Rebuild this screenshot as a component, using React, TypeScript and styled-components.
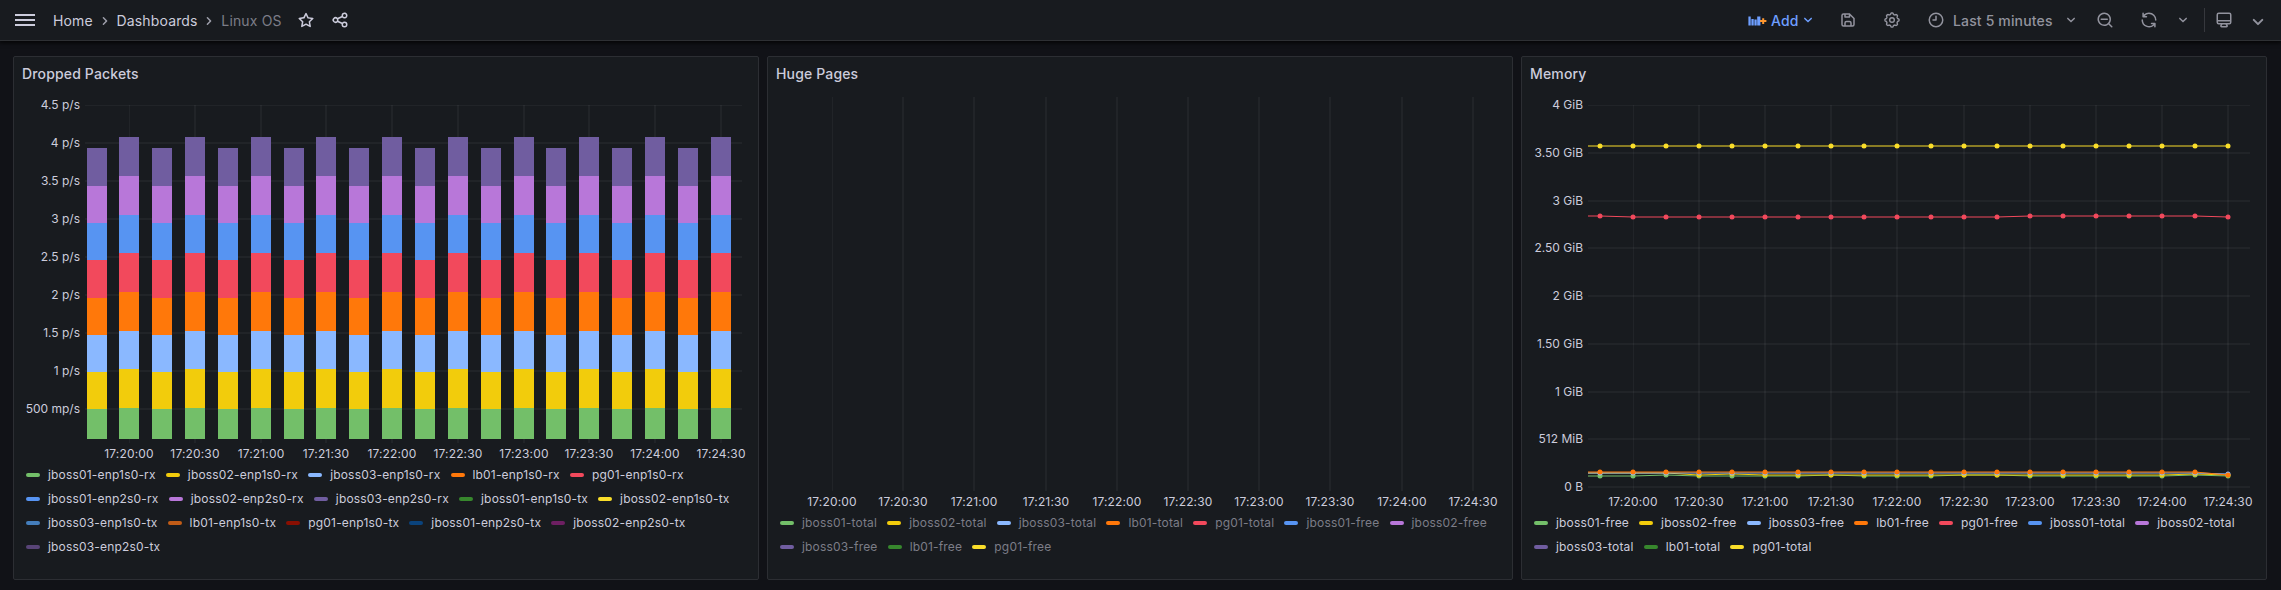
import React from 'react';
import styled, { createGlobalStyle } from 'styled-components';

const GlobalStyle = createGlobalStyle`
  * { box-sizing: border-box; }
  body {
    margin: 0;
    background: #111217;
    color: #ccccdc;
    font-family: Inter, Roboto, sans-serif;
    font-size: 14px;
    letter-spacing: 0.01071em;
    overflow: hidden;
  }
`;

const FONT = 'Inter, Roboto, sans-serif';
const GRID = 'rgba(240, 250, 255, 0.09)';

/* ---------- icons ---------- */

const ICONS = {
  angle:
    'M17,9.17a1,1,0,0,0-1.41,0L12,12.71,8.46,9.17a1,1,0,0,0-1.41,0,1,1,0,0,0,0,1.42l4.24,4.24a1,1,0,0,0,1.42,0L17,10.59A1,1,0,0,0,17,9.17Z',
  star:
    'M22,9.67A1,1,0,0,0,21.14,9l-5.69-.83L12.9,3a1,1,0,0,0-1.8,0L8.55,8.16,2.86,9a1,1,0,0,0-.81.68,1,1,0,0,0,.25,1l4.13,4-1,5.68A1,1,0,0,0,6.9,21.44L12,18.77l5.1,2.67a.93.93,0,0,0,.46.12,1,1,0,0,0,.59-.19,1,1,0,0,0,.4-1l-1-5.68,4.13-4A1,1,0,0,0,22,9.67Zm-6.15,4a1,1,0,0,0-.29.88l.72,4.2-3.76-2a1.06,1.06,0,0,0-.94,0l-3.76,2,.72-4.2a1,1,0,0,0-.29-.88l-3-3,4.21-.61a1,1,0,0,0,.76-.55L12,5.7l1.88,3.82a1,1,0,0,0,.76.55l4.21.61Z',
  share:
    'M18,14a4,4,0,0,0-3.08,1.48l-5.1-2.35a3.64,3.64,0,0,0,0-2.26l5.1-2.35A4,4,0,1,0,14,6a4.17,4.17,0,0,0,.07.71L8.79,9.14a4,4,0,1,0,0,5.72l5.28,2.43A4.17,4.17,0,0,0,14,18a4,4,0,1,0,4-4ZM18,4a2,2,0,1,1-2,2A2,2,0,0,1,18,4ZM6,14a2,2,0,1,1,2-2A2,2,0,0,1,6,14Zm12,6a2,2,0,1,1,2-2A2,2,0,0,1,18,20Z',
  save:
    'M20.71,9.29l-6-6a1,1,0,0,0-.32-.21A1.09,1.09,0,0,0,14,3H6A3,3,0,0,0,3,6V18a3,3,0,0,0,3,3H18a3,3,0,0,0,3-3V10A1,1,0,0,0,20.71,9.29ZM9,5h4V7H9Zm6,14H9V16a1,1,0,0,1,1-1h4a1,1,0,0,1,1,1Zm4-1a1,1,0,0,1-1,1H17V16a3,3,0,0,0-3-3H10a3,3,0,0,0-3,3v3H6a1,1,0,0,1-1-1V6A1,1,0,0,1,6,5H7V8A1,1,0,0,0,8,9h6a1,1,0,0,0,1-1V6.41l4,4Z',
  clock:
    'M12,2A10,10,0,1,0,22,12,10,10,0,0,0,12,2Zm0,18a8,8,0,1,1,8-8A8,8,0,0,1,12,20ZM12,6a1,1,0,0,0-1,1v4H8a1,1,0,0,0,0,2h4a1,1,0,0,0,1-1V7A1,1,0,0,0,12,6Z',
  zoomOut:
    'M15,10H7a1,1,0,0,0,0,2h8a1,1,0,0,0,0-2Zm6.71,10.29L18,16.61A9,9,0,1,0,16.61,18l3.68,3.68a1,1,0,0,0,1.42,0A1,1,0,0,0,21.71,20.29ZM11,18a7,7,0,1,1,7-7A7,7,0,0,1,11,18Z',
  sync:
    'M19.91,15.51H15.38a1,1,0,0,0,0,2h2.4A8,8,0,0,1,4,12a1,1,0,0,0-2,0,10,10,0,0,0,16.88,7.23V21a1,1,0,0,0,2,0V16.5A1,1,0,0,0,19.91,15.51ZM12,2A10,10,0,0,0,5.12,4.77V3a1,1,0,0,0-2,0V7.5a1,1,0,0,0,1,1h4.5a1,1,0,0,0,0-2H6.22A8,8,0,0,1,20,12a1,1,0,0,0,2,0A10,10,0,0,0,12,2Z',
  monitor:
    'M19,2H5A3,3,0,0,0,2,5V15a3,3,0,0,0,3,3H7.64l-.58,1a2,2,0,0,0,0,2,2,2,0,0,0,1.75,1h6.46A2,2,0,0,0,17,21a2,2,0,0,0,0-2l-.59-1H19a3,3,0,0,0,3-3V5A3,3,0,0,0,19,2ZM8.77,20,10,18H14l1.2,2ZM20,15a1,1,0,0,1-1,1H5a1,1,0,0,1-1-1V14H20Zm0-3H4V5A1,1,0,0,1,5,4H19a1,1,0,0,1,1,1Z',
};

const Svg = styled.svg<{ $size: number; $turn?: number }>`
  display: block;
  flex: none;
  width: ${p => p.$size}px;
  height: ${p => p.$size}px;
  transform: rotate(${p => p.$turn ?? 0}deg);
`;

function Icon({ name, size = 18, turn }: { name: keyof typeof ICONS; size?: number; turn?: number }) {
  return (
    <Svg viewBox="0 0 24 24" $size={size} $turn={turn} fill="currentColor">
      <path d={ICONS[name]} />
    </Svg>
  );
}

const gearOutline = (() => {
  const points: string[] = [];
  for (let i = 0; i < 96; i++) {
    const a = (i / 96) * Math.PI * 2;
    const wave = Math.tanh(1.8 * Math.cos(8 * a));
    const r = 8.5 + 0.95 * wave;
    points.push(`${(12 + r * Math.cos(a)).toFixed(2)},${(12 + r * Math.sin(a)).toFixed(2)}`);
  }
  return `M${points.join('L')}Z`;
})();

function GearIcon() {
  return (
    <Svg viewBox="0 0 24 24" $size={18} fill="none" stroke="currentColor" strokeWidth={1.9} strokeLinejoin="round">
      <path d={gearOutline} />
      <circle cx="12" cy="12" r="3.1" />
    </Svg>
  );
}

function PanelAddIcon() {
  return (
    <Svg viewBox="0 0 19 19" $size={19}>
      <g fill="#6e9fff">
        <rect x="0.4" y="5.5" width="2.3" height="9" />
        <rect x="3.4" y="8" width="2.3" height="6.5" />
        <rect x="6.4" y="8.5" width="2.3" height="6" />
        <rect x="9.2" y="5.5" width="3.2" height="9" />
      </g>
      <path d="M15.2 7.2v5.8M12 10.1h6.4" stroke="#ff9830" strokeWidth="2" />
    </Svg>
  );
}

/* ---------- top bar ---------- */

const TopBar = styled.header`
  position: relative;
  display: flex;
  align-items: center;
  justify-content: space-between;
  height: 41px;
  padding: 0 7px 0 15px;
  background: #181b1f;
  border-bottom: 1px solid #2e3034;
  box-shadow: 0 1px 4px 1px rgba(0, 0, 0, 0.75);
`;

const BarGroup = styled.div`
  display: flex;
  align-items: center;
  height: 40px;
`;

const MenuButton = styled.div`
  display: flex;
  flex-direction: column;
  gap: 3.5px;
  width: 20px;
  margin-right: 18px;
`;

const MenuLine = styled.span`
  height: 1.7px;
  background: #ccccdc;
`;

const Crumb = styled.span<{ $current?: boolean }>`
  line-height: 22px;
  padding-top: 2px;
  color: ${p => (p.$current ? '#7c7d87' : '#ccccdc')};
`;

const CrumbArrow = styled.span`
  display: flex;
  justify-content: center;
  width: 23.7px;
  color: #9d9eaa;
  padding-top: 2px;
`;

const Slot = styled.div<{ $w: number; $bright?: boolean; $drop?: number }>`
  display: flex;
  justify-content: center;
  align-items: center;
  width: ${p => p.$w}px;
  padding-top: ${p => p.$drop ?? 0}px;
  color: ${p => (p.$bright ? '#ccccdc' : '#92939e')};
`;

const AddButton = styled.div`
  display: flex;
  align-items: center;
  width: 72px;
  margin-right: 8px;
  color: #6e9fff;
  font-weight: 500;
  line-height: 22px;
`;

const AddLabel = styled.span`
  padding-top: 2px;
  margin: 0 0 0 4px;
`;

const TimeButton = styled.div`
  display: flex;
  align-items: center;
  gap: 8px;
  width: 147px;
  padding-left: 11px;
  color: #92939e;
  font-weight: 500;
  line-height: 22px;
  white-space: nowrap;
`;

const TimeLabel = styled.span`
  padding-top: 2px;
`;

const Divider = styled.div`
  width: 1px;
  height: 24px;
  margin-left: 5px;
  background: #36383d;
`;

/* ---------- panels ---------- */

const Dashboard = styled.main`
  display: grid;
  grid-template-columns: repeat(3, 746px);
  gap: 8px;
  padding: 15px 14px 10px 13px;
`;

const Panel = styled.section`
  display: flex;
  flex-direction: column;
  height: 524px;
  background: #181b1f;
  border: 1px solid #2c2e33;
  border-radius: 2px;
`;

const PanelTitle = styled.h2`
  height: 33px;
  margin: 0;
  padding: 1px 8px 0;
  font-size: 14px;
  font-weight: 500;
  line-height: 32px;
`;

const Plot = styled.svg`
  display: block;
  width: 744px;
  font-family: ${FONT};
  font-size: 12px;
  letter-spacing: 0;
  fill: #ccccdc;
`;

const TimeTick = styled.text`
  letter-spacing: 0.15px;
`;

const Legend = styled.ul`
  display: flex;
  flex-wrap: wrap;
  column-gap: 10.1px;
  margin: 0;
  padding: 0 12px;
  list-style: none;
`;

const LegendItem = styled.li<{ $dim?: boolean }>`
  display: flex;
  align-items: center;
  gap: 8px;
  height: 24px;
  font-size: 12px;
  letter-spacing: 0.18px;
  white-space: nowrap;
  color: ${p => (p.$dim ? '#7c7d87' : '#ccccdc')};
`;

const LegendName = styled.span`
  line-height: 22px;
  margin-bottom: 1px;
`;

const Swatch = styled.span<{ $color: string }>`
  width: 14px;
  height: 4px;
  border-radius: 2px;
  background: ${p => p.$color};
`;

type Series = [name: string, color: string];

function SeriesLegend({ items, dim }: { items: Series[]; dim?: boolean }) {
  return (
    <Legend>
      {items.map(([name, color]) => (
        <LegendItem key={name} $dim={dim}>
          <Swatch $color={color} />
          <LegendName>{name}</LegendName>
        </LegendItem>
      ))}
    </Legend>
  );
}

const PALETTE = ['#73bf69', '#f2cc0c', '#8ab8ff', '#ff780a', '#f2495c', '#5794f2', '#b877d9', '#705da0', '#37872d', '#fade2a'];
const TIMES = [
  '17:20:00', '17:20:30', '17:21:00', '17:21:30', '17:22:00',
  '17:22:30', '17:23:00', '17:23:30', '17:24:00', '17:24:30',
];

interface GridProps {
  id: string;
  xs: number[];
  ys?: [label: string, y: number][];
  left?: number;
  right?: number;
  top: number;
  bottom: number;
  labelY: number;
  labelX?: number;
}

function Grid({ id, xs, ys = [], left = 0, right = 0, top, bottom, labelY, labelX = 0 }: GridProps) {
  return (
    <>
      <clipPath id={`${id}-v`}>
        <rect x={xs[0]} y={top} width={744 - xs[0]} height={bottom - top} />
      </clipPath>
      <clipPath id={`${id}-h`}>
        <rect x={left} y={top} width={Math.max(0, right - left)} height={bottom - top} />
      </clipPath>
      <g clipPath={`url(#${id}-v)`} stroke={GRID}>
        {xs.map(x => <line key={x} x1={x} x2={x} y1={top} y2={bottom} />)}
      </g>
      <g clipPath={`url(#${id}-h)`} stroke={GRID}>
        {ys.map(([label, y]) => <line key={label} x1={left} x2={right} y1={y} y2={y} />)}
      </g>
      {ys.map(([label, y]) => (
        <text key={label} x={labelX} y={y + 4} textAnchor="end">{label}</text>
      ))}
      {xs.map((x, i) => (
        <TimeTick key={x} x={x} y={labelY} textAnchor="middle">{TIMES[i]}</TimeTick>
      ))}
    </>
  );
}

/* Dropped packets: stacked bars */

const BAR_X = [73, 105, 138, 171, 204, 237, 270, 302, 335, 368, 401, 434, 467, 500, 532, 565, 598, 631, 664, 697];
const TALL = [349, 318, 279, 241, 202, 163, 125, 86, 47];
const SHORT = [349, 319, 282, 245, 208, 170, 133, 96, 58];

const DROPPED: Series[] = [
  ['jboss01-enp1s0-rx', '#73bf69'], ['jboss02-enp1s0-rx', '#f2cc0c'], ['jboss03-enp1s0-rx', '#8ab8ff'],
  ['lb01-enp1s0-rx', '#ff780a'], ['pg01-enp1s0-rx', '#f2495c'], ['jboss01-enp2s0-rx', '#5794f2'],
  ['jboss02-enp2s0-rx', '#b877d9'], ['jboss03-enp2s0-rx', '#705da0'], ['jboss01-enp1s0-tx', '#37872d'],
  ['jboss02-enp1s0-tx', '#fade2a'], ['jboss03-enp1s0-tx', '#447ebc'], ['lb01-enp1s0-tx', '#c15c17'],
  ['pg01-enp1s0-tx', '#890f02'], ['jboss01-enp2s0-tx', '#0a437c'], ['jboss02-enp2s0-tx', '#6d1f62'],
  ['jboss03-enp2s0-tx', '#584477'],
];

function DroppedPackets() {
  return (
    <Panel>
      <PanelTitle>Dropped Packets</PanelTitle>
      <Plot height={373} viewBox="0 0 744 373">
        <Grid
          id="dropped"
          xs={[115, 181, 247, 312, 378, 444, 510, 575, 641, 707]}
          ys={[
            ['4.5 p/s', 15], ['4 p/s', 53], ['3.5 p/s', 91], ['3 p/s', 129], ['2.5 p/s', 167],
            ['2 p/s', 205], ['1.5 p/s', 243], ['1 p/s', 281], ['500 mp/s', 319],
          ]}
          left={71} right={728} top={15} bottom={353} labelY={368} labelX={66}
        />
        {BAR_X.map((x, i) => {
          const edges = i % 2 ? TALL : SHORT;
          return edges.slice(1).map((top, k) => (
            <rect key={`${x}-${k}`} x={x} y={top} width={20} height={edges[k] - top} fill={PALETTE[k]} />
          ));
        })}
      </Plot>
      <SeriesLegend items={DROPPED} />
    </Panel>
  );
}

/* Huge pages: no data */

const series = (names: string[]): Series[] => names.map((n, i) => [n, PALETTE[i]]);

function HugePages() {
  return (
    <Panel>
      <PanelTitle>Huge Pages</PanelTitle>
      <Plot height={421} viewBox="0 0 744 421">
        <Grid id="huge" xs={[64, 135, 206, 278, 349, 420, 491, 562, 634, 705]} top={7} bottom={401} labelY={416} />
      </Plot>
      <SeriesLegend
        dim
        items={series([
          'jboss01-total', 'jboss02-total', 'jboss03-total', 'lb01-total', 'pg01-total',
          'jboss01-free', 'jboss02-free', 'jboss03-free', 'lb01-free', 'pg01-free',
        ])}
      />
    </Panel>
  );
}

/* Memory: lines with points */

const POINT_X = [78, 111, 144, 177, 210, 243, 276, 309, 342, 375, 409, 442, 475, 508, 541, 574, 607, 640, 673, 706];

const MEMORY_LINES: { color: string; ys: number[] }[] = [
  { color: '#73bf69', ys: [386, 386, 385, 386, 386, 386, 386, 385, 386, 386, 386, 385, 385, 386, 386, 386, 386, 386, 385, 386] },
  { color: '#f2cc0c', ys: [383, 383, 383, 385, 384, 385, 385, 385, 385, 385, 385, 385, 385, 385, 385, 385, 385, 385, 384, 385] },
  { color: '#8ab8ff', ys: [383, 383, 383, 383, 383, 383, 383, 383, 383, 383, 383, 383, 383, 383, 383, 383, 383, 383, 383, 384] },
  { color: '#ff780a', ys: [382, 382, 382, 382, 382, 382, 382, 382, 382, 382, 382, 382, 382, 382, 382, 382, 382, 382, 382, 385] },
  { color: '#f2495c', ys: [126, 127, 127, 127, 127, 127, 127, 127, 127, 127, 127, 127, 127, 126, 126, 126, 126, 126, 126, 127] },
  { color: '#fade2a', ys: Array(20).fill(56) },
];

function Memory() {
  return (
    <Panel>
      <PanelTitle>Memory</PanelTitle>
      <Plot height={421} viewBox="0 0 744 421">
        <Grid
          id="memory"
          xs={[111, 177, 243, 309, 375, 442, 508, 574, 640, 706]}
          ys={[
            ['4 GiB', 15], ['3.50 GiB', 63], ['3 GiB', 111], ['2.50 GiB', 158], ['2 GiB', 206],
            ['1.50 GiB', 254], ['1 GiB', 302], ['512 MiB', 349], ['0 B', 397],
          ]}
          left={66} right={728} top={15} bottom={401} labelY={416} labelX={61}
        />
        {MEMORY_LINES.map(({ color, ys }) => (
          <g key={color}>
            <polyline
              fill="none"
              stroke={color}
              points={[`66,${ys[0]}`, ...POINT_X.map((x, i) => `${x},${ys[i]}`)].join(' ')}
            />
            {POINT_X.map((x, i) => <circle key={x} cx={x} cy={ys[i]} r={2.5} fill={color} />)}
          </g>
        ))}
      </Plot>
      <SeriesLegend
        items={series([
          'jboss01-free', 'jboss02-free', 'jboss03-free', 'lb01-free', 'pg01-free',
          'jboss01-total', 'jboss02-total', 'jboss03-total', 'lb01-total', 'pg01-total',
        ])}
      />
    </Panel>
  );
}

export default function App() {
  return (
    <>
      <GlobalStyle />
      <TopBar>
        <BarGroup>
          <MenuButton><MenuLine /><MenuLine /><MenuLine /></MenuButton>
          <Crumb>Home</Crumb>
          <CrumbArrow><Icon name="angle" turn={-90} /></CrumbArrow>
          <Crumb>Dashboards</Crumb>
          <CrumbArrow><Icon name="angle" turn={-90} /></CrumbArrow>
          <Crumb $current>Linux OS</Crumb>
          <Slot $w={48} $bright><Icon name="star" /></Slot>
          <Slot $w={20} $bright><Icon name="share" /></Slot>
        </BarGroup>
        <BarGroup>
          <AddButton>
            <PanelAddIcon />
            <AddLabel>Add</AddLabel>
            <Icon name="angle" />
          </AddButton>
          <Slot $w={40}><Icon name="save" /></Slot>
          <Slot $w={48}><GearIcon /></Slot>
          <TimeButton>
            <Icon name="clock" />
            <TimeLabel>Last 5 minutes</TimeLabel>
          </TimeButton>
          <Slot $w={16}><Icon name="angle" /></Slot>
          <Slot $w={52}><Icon name="zoomOut" /></Slot>
          <Slot $w={36}><Icon name="sync" /></Slot>
          <Slot $w={32}><Icon name="angle" /></Slot>
          <Divider />
          <Slot $w={37}><Icon name="monitor" /></Slot>
          <Slot $w={32} $drop={4}><Icon name="angle" size={24} /></Slot>
        </BarGroup>
      </TopBar>
      <Dashboard>
        <DroppedPackets />
        <HugePages />
        <Memory />
      </Dashboard>
    </>
  );
}
